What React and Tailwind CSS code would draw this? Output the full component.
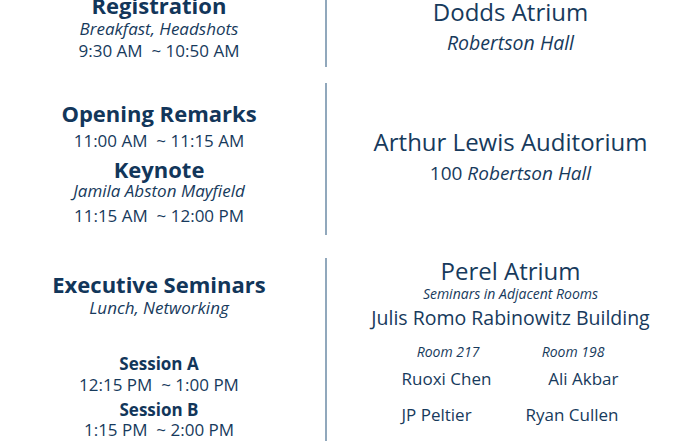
import React from "react";

const rooms = [
  { left: "Ruoxi Chen", right: "Ali Akbar", lh: "leading-[34px]" },
  { left: "JP Peltier", right: "Ryan Cullen", lh: "leading-[38px]" },
];

const Divider = () => (
  <div className="flex justify-center">
    <div className="w-[2px] h-full bg-[#91a8bc]" />
  </div>
);

const Row = ({ className, left, right }) => (
  <div className={`grid grid-cols-[318px_16px_1fr] ${className}`}>
    <div className="flex flex-col items-center text-center">{left}</div>
    <Divider />
    <div className="flex flex-col items-center text-center pr-[13px]">{right}</div>
  </div>
);

export default function App() {
  return (
    <div className="w-[700px] h-[441px] overflow-hidden bg-white text-[#173a5c] font-['Open_Sans',sans-serif]">
      {/* registration */}
      <Row
        className="h-[67px]"
        left={
          <div className="-mt-[8px] flex flex-col items-center">
            <div className="text-[22px] font-bold leading-[26px] text-[#12365a]">Registration</div>
            <div className="text-[17px] italic leading-[22px]">Breakfast, Headshots</div>
            <div className="text-[17px] leading-[22px] whitespace-pre">9:30 AM  ~ 10:50 AM</div>
          </div>
        }
        right={
          <div className="-mt-[4px] flex flex-col items-center">
            <div className="text-[24px] leading-[32px]">Dodds Atrium</div>
            <div className="text-[19.5px] italic leading-[29px]">Robertson Hall</div>
          </div>
        }
      />

      {/* opening + keynote */}
      <Row
        className="h-[152px] mt-[16px]"
        left={
          <div className="mt-[15px] flex flex-col items-center">
            <div className="text-[22px] font-bold leading-[30px] text-[#12365a]">Opening Remarks</div>
            <div className="text-[17px] leading-[25px] whitespace-pre">11:00 AM  ~ 11:15 AM</div>
            <div className="mt-[5px] text-[22px] font-bold leading-[22px] text-[#12365a]">Keynote</div>
            <div className="text-[17px] italic leading-[22px]">Jamila Abston Mayfield</div>
            <div className="text-[17px] leading-[28px] whitespace-pre">11:15 AM  ~ 12:00 PM</div>
          </div>
        }
        right={
          <div className="mt-[43px] flex flex-col items-center">
            <div className="text-[24px] leading-[32px]">Arthur Lewis Auditorium</div>
            <div className="text-[19px] leading-[30px]">
              100 <span className="italic">Robertson Hall</span>
            </div>
          </div>
        }
      />

      {/* seminars */}
      <Row
        className="h-[200px] mt-[23px]"
        left={
          <div className="mt-[12px] flex flex-col items-center">
            <div className="text-[22px] font-bold leading-[28px] text-[#12365a]">Executive Seminars</div>
            <div className="text-[17px] italic leading-[19px]">Lunch, Networking</div>
            <div className="mt-[36px] text-[17px] font-bold leading-[22px] text-[#12365a]">Session A</div>
            <div className="text-[17px] leading-[20px] whitespace-pre">12:15 PM  ~ 1:00 PM</div>
            <div className="mt-[5px] text-[17px] font-bold leading-[20px] text-[#12365a]">Session B</div>
            <div className="text-[17px] leading-[20px] whitespace-pre">1:15 PM  ~ 2:00 PM</div>
          </div>
        }
        right={
          <div className="-mt-[1px] flex flex-col items-center w-full">
            <div className="text-[24px] leading-[28px]">Perel Atrium</div>
            <div className="text-[14px] italic leading-[18px]">Seminars in Adjacent Rooms</div>
            <div className="text-[19.5px] leading-[30px]">Julis Romo Rabinowitz Building</div>
            <div className="mt-[9px] grid grid-cols-2 w-[250px]">
              <div className="text-center text-[14px] italic leading-[20px]">Room 217</div>
              <div className="text-center text-[14px] italic leading-[20px]">Room 198</div>
              {rooms.map((r) => (
                <React.Fragment key={r.left}>
                  <div className={`text-left pl-[16px] text-[17px] ${r.lh}`}>{r.left}</div>
                  <div className={`text-right pr-[17px] text-[17px] ${r.lh}`}>{r.right}</div>
                </React.Fragment>
              ))}
            </div>
          </div>
        }
      />
    </div>
  );
}
